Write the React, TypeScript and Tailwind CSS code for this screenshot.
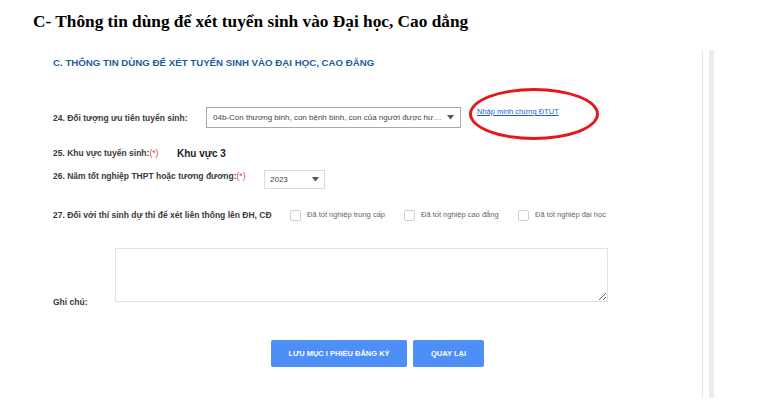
import React from "react";

const labelCls = "text-[8.5px] font-bold text-[#3a3a3a] leading-[12px]";

function Arrow() {
  return (
    <svg width="7" height="5" viewBox="0 0 7 5" className="shrink-0">
      <path d="M0 0 L7 0 L3.5 4.5 Z" fill="#555" />
    </svg>
  );
}

function Check({ text }: { text: string }) {
  return (
    <label className="flex w-[114px] items-center gap-[6px]">
      <span className="h-[11px] w-[11px] rounded-[2px] border border-[#cfcfcf] bg-white" />
      <span className="text-[7.5px] text-[#666]">{text}</span>
    </label>
  );
}

export default function App() {
  return (
    <div className="relative h-[413px] w-[763px] overflow-hidden bg-white font-['Liberation_Sans',Arial,sans-serif]">
      <h1 className="pl-[33px] pt-[11px] font-['Liberation_Serif','Times_New_Roman',serif] text-[17.3px] font-bold leading-[22px] text-black">
        C- Thông tin dùng để xét tuyển sinh vào Đại học, Cao dẳng
      </h1>

      <div className="mt-[17px] flex">
        <div className="h-[348px] w-[703px] border-r border-[#e4e4e4] pl-[53px] pt-[6px]">
          {/* heading */}
          <h2 className="text-[9.7px] font-bold leading-[14px] text-[#1f5c9c]">
            C. THÔNG TIN DÙNG ĐỂ XÉT TUYỂN SINH VÀO ĐẠI HỌC, CAO ĐẲNG
          </h2>

          {/* 24 */}
          <div className="mt-[37px] flex h-[21px] items-center">
            <div className={`${labelCls} w-[153px]`}>24. Đối tượng ưu tiên tuyển sinh:</div>
            <div className="flex h-[21px] w-[255px] items-center justify-between border border-[#a9a9a9] bg-white pl-[6px] pr-[6px]">
              <span className="truncate text-[8px] text-[#444]">
                04b-Con thương binh, con bệnh binh, con của người được hư…
              </span>
              <Arrow />
            </div>
            <a className="ml-[16px] self-start text-[7.5px] leading-[10px] text-[#1a5fd0] underline">
              Nhập minh chứng ĐTUT
            </a>
          </div>

          {/* 25 */}
          <div className="mt-[18px] flex h-[14px] items-center">
            <div className={`${labelCls} w-[124px]`}>
              25. Khu vực tuyển sinh:<span className="font-normal text-[#e0403a]">(*)</span>
            </div>
            <div className="text-[10px] font-bold text-[#222]">Khu vực 3</div>
          </div>

          {/* 26 */}
          <div className="mt-[10px] flex h-[19px] items-start">
            <div className={`${labelCls} w-[211px]`}>
              26. Năm tốt nghiệp THPT hoặc tương đương:<span className="font-normal text-[#e0403a]">(*)</span>
            </div>
            <div className="flex h-[19px] w-[61px] items-center justify-between border border-[#dcdcdc] bg-white pl-[5px] pr-[5px]">
              <span className="text-[8px] text-[#444]">2023</span>
              <Arrow />
            </div>
          </div>

          {/* 27 */}
          <div className="mt-[19px] flex h-[14px] items-center">
            <div className={`${labelCls} w-[237px]`}>27. Đối với thí sinh dự thi để xét liên thông lên ĐH, CĐ</div>
            <Check text="Đã tốt nghiệp trung cấp" />
            <Check text="Đã tốt nghiệp cao đẳng" />
            <Check text="Đã tốt nghiệp đại học" />
          </div>

          {/* ghi chu */}
          <div className="mt-[26px] flex items-end">
            <div className={`${labelCls} w-[62px] translate-y-[6px]`}>Ghi chú:</div>
            <textarea className="h-[54px] w-[493px] resize border border-[#e2e2e2] bg-white" />
          </div>

          {/* buttons */}
          <div className="ml-[218px] mt-[38px] flex gap-[6px]">
            <button className="h-[27px] w-[136px] rounded-[2px] bg-[#4d8ef7] text-[7.5px] font-bold text-white">
              LƯU MỤC I PHIẾU ĐĂNG KÝ
            </button>
            <button className="h-[27px] w-[71px] rounded-[2px] bg-[#4d8ef7] text-[7.5px] font-bold text-white">
              QUAY LẠI
            </button>
          </div>
        </div>
        <div className="ml-[6px] h-[348px] w-[5px] bg-[#ececec]" />
      </div>

      {/* red annotation ellipse */}
      <div className="absolute left-[469px] top-[88px] h-[52px] w-[130px] rounded-[50%] border-[3px] border-[#e8161b]" />
    </div>
  );
}
